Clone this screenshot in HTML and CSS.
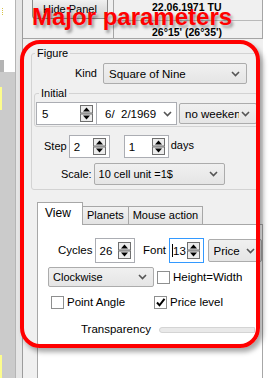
FILE: index.html
```html
<!DOCTYPE html>
<html>
	<head>
		<meta charset="UTF-8">
		<title>Major parameters</title>
		<link rel="stylesheet" href="styles.css">
	</head>
	<body>
		<div class="app">
			<div class="dock">
				<div class="dock-bar">
					<div class="dock-top"><span class="mark"></span></div>
					<div class="dock-grip"></div>
					<div class="dock-body">
						<span class="hilite"></span>
						<span class="hilite low"></span>
					</div>
				</div>
				<div class="dock-gap"></div>
			</div>

			<div class="panel">
				<div class="head">
					<div class="head-left"><button class="btn">Hide Panel</button></div>
					<div class="head-info">
						<div class="info-row">22.06.1971 TU</div>
						<div class="info-row second">26°15' (26°35')</div>
					</div>
				</div>

				<fieldset class="group figure">
					<legend>Figure</legend>
					<div class="row kind-row">
						<span class="lbl kind-lbl">Kind</span>
						<div class="combo kind-combo">
							<span class="combo-text">Square of Nine</span>
							<svg class="chev" width="9" height="6" viewBox="0 0 9 6"><polyline points="1,1 4.5,4.5 8,1" fill="none" stroke="#555" stroke-width="1.6"/></svg>
						</div>
					</div>

					<fieldset class="group initial">
						<legend>Initial</legend>
						<div class="row">
							<div class="spin spin-initial">
								<span class="val">5</span>
								<svg class="spin-btn" width="13" height="17" viewBox="0 0 13 17"><rect x="0.5" y="0.5" width="12" height="7.5" fill="#ececec" stroke="#6f6f6f"/><rect x="0.5" y="9" width="12" height="7.5" fill="#ececec" stroke="#6f6f6f"/><path d="M3 6.5h7L6.5 2.5z" fill="#000"/><path d="M3 10.5h7l-3.5 4z" fill="#000"/></svg>
							</div>
							<div class="date">
								<span class="combo-text">6/&nbsp; 2/1969</span>
								<svg class="chev" width="9" height="6" viewBox="0 0 9 6"><polyline points="1,1 4.5,4.5 8,1" fill="none" stroke="#555" stroke-width="1.6"/></svg>
							</div>
							<div class="combo week-combo">
								<span class="combo-text">no weekends</span>
								<svg class="chev" width="9" height="6" viewBox="0 0 9 6"><polyline points="1,1 4.5,4.5 8,1" fill="none" stroke="#555" stroke-width="1.6"/></svg>
							</div>
						</div>
					</fieldset>

					<div class="row step-row">
						<span class="lbl">Step</span>
						<div class="spin spin-step">
							<span class="val">2</span>
							<svg class="spin-btn" width="13" height="17" viewBox="0 0 13 17"><rect x="0.5" y="0.5" width="12" height="7.5" fill="#ececec" stroke="#6f6f6f"/><rect x="0.5" y="9" width="12" height="7.5" fill="#ececec" stroke="#6f6f6f"/><path d="M3 6.5h7L6.5 2.5z" fill="#000"/><path d="M3 10.5h7l-3.5 4z" fill="#000"/></svg>
						</div>
						<div class="spin spin-days">
							<span class="val">1</span>
							<svg class="spin-btn" width="13" height="17" viewBox="0 0 13 17"><rect x="0.5" y="0.5" width="12" height="7.5" fill="#ececec" stroke="#6f6f6f"/><rect x="0.5" y="9" width="12" height="7.5" fill="#ececec" stroke="#6f6f6f"/><path d="M3 6.5h7L6.5 2.5z" fill="#000"/><path d="M3 10.5h7l-3.5 4z" fill="#000"/></svg>
						</div>
						<span class="lbl days">days</span>
					</div>

					<div class="row scale-row">
						<span class="lbl">Scale:</span>
						<div class="combo scale-combo">
							<span class="combo-text">10 cell unit =1$</span>
							<svg class="chev" width="9" height="6" viewBox="0 0 9 6"><polyline points="1,1 4.5,4.5 8,1" fill="none" stroke="#555" stroke-width="1.6"/></svg>
						</div>
					</div>
				</fieldset>

				<div class="tabs">
					<div class="tab active">View</div>
					<div class="tab">Planets</div>
					<div class="tab">Mouse action</div>
				</div>
				<div class="pane">
					<div class="row cycles-row">
						<span class="lbl">Cycles</span>
						<div class="spin spin-cycles">
							<span class="val">26</span>
							<svg class="spin-btn" width="13" height="17" viewBox="0 0 13 17"><rect x="0.5" y="0.5" width="12" height="7.5" fill="#ececec" stroke="#6f6f6f"/><rect x="0.5" y="9" width="12" height="7.5" fill="#ececec" stroke="#6f6f6f"/><path d="M3 6.5h7L6.5 2.5z" fill="#000"/><path d="M3 10.5h7l-3.5 4z" fill="#000"/></svg>
						</div>
						<span class="lbl font-lbl">Font</span>
						<div class="spin spin-font">
							<span class="val"><i class="caret"></i>13</span>
							<svg class="spin-btn" width="13" height="17" viewBox="0 0 13 17"><rect x="0.5" y="0.5" width="12" height="7.5" fill="#ececec" stroke="#6f6f6f"/><rect x="0.5" y="9" width="12" height="7.5" fill="#ececec" stroke="#6f6f6f"/><path d="M3 6.5h7L6.5 2.5z" fill="#000"/><path d="M3 10.5h7l-3.5 4z" fill="#000"/></svg>
						</div>
						<div class="combo price-combo">
							<span class="combo-text">Price</span>
							<svg class="chev" width="9" height="6" viewBox="0 0 9 6"><polyline points="1,1 4.5,4.5 8,1" fill="none" stroke="#555" stroke-width="1.6"/></svg>
						</div>
					</div>

					<div class="row dir-row">
						<div class="combo dir-combo">
							<span class="combo-text">Clockwise</span>
							<svg class="chev" width="9" height="6" viewBox="0 0 9 6"><polyline points="1,1 4.5,4.5 8,1" fill="none" stroke="#555" stroke-width="1.6"/></svg>
						</div>
						<span class="box"></span>
						<span class="lbl check-lbl">Height=Width</span>
					</div>

					<div class="row checks-row">
						<div class="check first">
							<span class="box"></span>
							<span class="lbl check-lbl">Point Angle</span>
						</div>
						<div class="check">
							<span class="box"><svg width="11" height="11" viewBox="0 0 11 11"><path d="M2 5.5l2.5 2.8L9.5 1.8" fill="none" stroke="#000" stroke-width="2"/></svg></span>
							<span class="lbl check-lbl">Price level</span>
						</div>
					</div>

					<div class="row slide-row">
						<span class="lbl">Transparency</span>
						<div class="track"></div>
					</div>
				</div>
			</div>

			<div class="edge"></div>
		</div>

		<div class="callout"></div>
		<div class="callout-title">Major parameters</div>
	</body>
</html>
```

FILE: styles.css
```css
* {
	margin: 0;
	padding: 0;
	box-sizing: border-box;
}
body {
	width: 270px;
	height: 378px;
	overflow: hidden;
	position: relative;
	background: #fff;
	font-family: "Liberation Sans", Arial, sans-serif;
	font-size: 11px;
	color: #000;
}
.app {
	display: flex;
	height: 378px;
}

/* left dock strip */
.dock {
	width: 23px;
	display: flex;
	border-right: 1px solid #9c9c9c;
}
.dock-bar {
	width: 16px;
	display: flex;
	flex-direction: column;
	border-right: 1px solid #b5b5b5;
}
.dock-top {
	height: 60px;
	background: #fff;
	padding: 8px 0 0 2px;
}
.mark {
	display: block;
	width: 1px;
	height: 7px;
	border-left: 1px dotted #d6c34a;
}
.dock-grip {
	height: 12px;
	width: 4px;
	background: #b4b4b4;
}
.dock-body {
	flex: 1;
	background: #cbcbcb;
	display: flex;
	flex-direction: column;
}
.hilite {
	display: block;
	width: 2px;
	height: 23px;
	margin-top: 15px;
	background: #fdfd8c;
}
.hilite.low {
	margin-top: auto;
}
.dock-gap {
	flex: 1;
	background: #e6e6e6;
}

/* main panel */
.panel {
	width: 240px;
	background: #f0f0f0;
	display: flex;
	flex-direction: column;
}
.edge {
	flex: 1;
	background: #fff;
}
.head {
	height: 39px;
	display: flex;
	border-bottom: 1px solid #a5a5a5;
}
.head-left {
	width: 90px;
}
.btn {
	display: block;
	width: 76px;
	height: 22px;
	margin: -3px 0 0 9px;
	border: 1px solid #8a8a8a;
	border-radius: 3px;
	background: linear-gradient(#f4f4f4, #e1e1e1 50%, #d6d6d6);
	font: 11px "Liberation Sans", Arial, sans-serif;
	padding-top: 2px;
	color: #000;
}
.head-info {
	width: 150px;
	border-left: 1px solid #a5a5a5;
	border-right: 1px solid #a5a5a5;
}
.info-row {
	height: 21px;
	line-height: 14px;
	padding-left: 38px;
	font-weight: bold;
	font-size: 10.5px;
	border-bottom: 1px solid #b9b9b9;
}
.info-row.second {
	height: auto;
	border-bottom: 0;
	padding-top: 4px;
}

/* group boxes */
.group {
	border: 1px solid #d3d3d3;
	border-radius: 3px;
	min-width: 0;
}
.group legend {
	line-height: 13px;
	padding: 0 2px;
}
.figure {
	width: 228px;
	margin: 8px 0 0 8px;
	padding: 0 0 4px 0;
}
.figure > legend {
	margin-left: 3px;
}
.initial {
	width: 224px;
	margin: 3px 0 0 2px;
	padding: 0 0 1px 0;
}
.initial > legend {
	margin-left: 4px;
}
.initial .row {
	margin-top: 2px;
}
.row {
	display: flex;
	align-items: center;
}
.lbl {
	line-height: 13px;
	white-space: nowrap;
}
.kind-row {
	margin-top: 3px;
}
.kind-lbl {
	width: 65px;
	text-align: right;
	margin-right: 6px;
}

/* combos */
.combo {
	display: flex;
	align-items: center;
	height: 21px;
	border: 1px solid #acacac;
	border-radius: 2px;
	background: linear-gradient(#f0f0f0, #e5e5e5);
	padding: 0 6px 0 5px;
}
.combo-text {
	flex: 1;
	overflow: hidden;
	white-space: nowrap;
}
.chev {
	flex: none;
	margin-left: 2px;
}
.kind-combo {
	width: 144px;
	font-size: 11.5px;
}
.date {
	display: flex;
	align-items: center;
	width: 80px;
	height: 23px;
	border: 1px solid #abadb3;
	border-left: 0;
	background: #fff;
	padding: 0 4px 0 8px;
	font-size: 11.5px;
}
.week-combo {
	width: 78px;
	margin-left: 2px;
	font-size: 11.5px;
}
.scale-combo {
	width: 131px;
	height: 22px;
	margin-left: 2px;
	padding-left: 4px;
}
.price-combo {
	width: 55px;
	height: 23px;
	margin-left: 4px;
	font-size: 11.5px;
}
.dir-combo {
	width: 106px;
	height: 20px;
	margin-left: 10px;
	padding-left: 4px;
}

/* spinners */
.spin {
	display: flex;
	align-items: center;
	height: 23px;
	border: 1px solid #abadb3;
	background: #fff;
	font-size: 11.5px;
}
.spin .val {
	flex: 1;
	padding-left: 4px;
	white-space: nowrap;
}
.spin-btn {
	flex: none;
	margin-right: 3px;
}
.spin-initial {
	width: 61px;
	margin-left: 1px;
	padding-left: 1px;
}
.step-row {
	margin-top: 8px;
	padding-left: 12px;
}
.spin-step {
	width: 41px;
	margin-left: 2px;
}
.spin-days {
	width: 45px;
	margin-left: 14px;
}
.days {
	margin-left: 2px;
	margin-top: -3px;
}
.scale-row {
	margin-top: 5px;
	padding-left: 29px;
}

/* tabs */
.tabs {
	display: flex;
	align-items: flex-end;
	height: 22px;
	margin: 12px 0 0 14px;
}
.tab {
	height: 18px;
	line-height: 17px;
	padding: 0 4px;
	border: 1px solid #a7a7a7;
	border-bottom: 0;
	margin-left: -1px;
	background: linear-gradient(#f2f2f2, #e3e3e3);
}
.tab.active {
	position: relative;
	z-index: 1;
	height: 23px;
	margin: 0 0 -1px 0;
	width: 46px;
	padding: 2px 0 0 7px;
	font-size: 12px;
	background: #fff;
}
.pane {
	flex: 1;
	margin-left: 14px;
	width: 226px;
	border: 1px solid #a7a7a7;
	border-bottom: 0;
	background: #fff;
}
.cycles-row {
	margin-top: 13px;
	padding-left: 20px;
	font-size: 11.5px;
}
.spin-cycles {
	width: 41px;
	height: 25px;
	margin-left: 2px;
}
.font-lbl {
	margin-left: 8px;
}
.spin-font {
	width: 35px;
	height: 25px;
	margin-left: 3px;
	border-color: #3399ff;
}
.spin-font .val {
	padding-left: 2px;
}
.caret {
	display: inline-block;
	width: 1px;
	height: 13px;
	background: #000;
	vertical-align: -2px;
}
.dir-row {
	margin-top: 4px;
}
.box {
	display: flex;
	align-items: center;
	justify-content: center;
	width: 13px;
	height: 13px;
	border: 1px solid #8e8f8f;
	background: #fff;
	flex: none;
}
.dir-row .box {
	margin-left: 3px;
}
.check-lbl {
	margin-left: 3px;
	font-size: 11.5px;
}
.checks-row {
	margin-top: 9px;
	padding-left: 13px;
}
.check {
	display: flex;
	align-items: center;
}
.check.first {
	width: 103px;
}
.slide-row {
	margin-top: 14px;
	padding-left: 43px;
	font-size: 11.5px;
}
.track {
	width: 96px;
	height: 6px;
	margin-left: 8px;
	border: 1px solid #d4d4d4;
	border-radius: 3px 0 0 3px;
	background: #e9e9e9;
}

/* red annotation over the panel */
.callout {
	position: absolute;
	left: 20px;
	top: 40px;
	width: 240px;
	height: 308px;
	border: 4px solid #f00;
	border-radius: 20px;
	box-shadow: 3px 4px 5px rgba(0, 0, 0, 0.35);
}
.callout-title {
	position: absolute;
	left: 32px;
	top: 5px;
	font: bold 24px/24px "Liberation Sans", Arial, sans-serif;
	color: #f00;
	white-space: nowrap;
	text-shadow: 2px 3px 3px rgba(0, 0, 0, 0.35);
}
```
